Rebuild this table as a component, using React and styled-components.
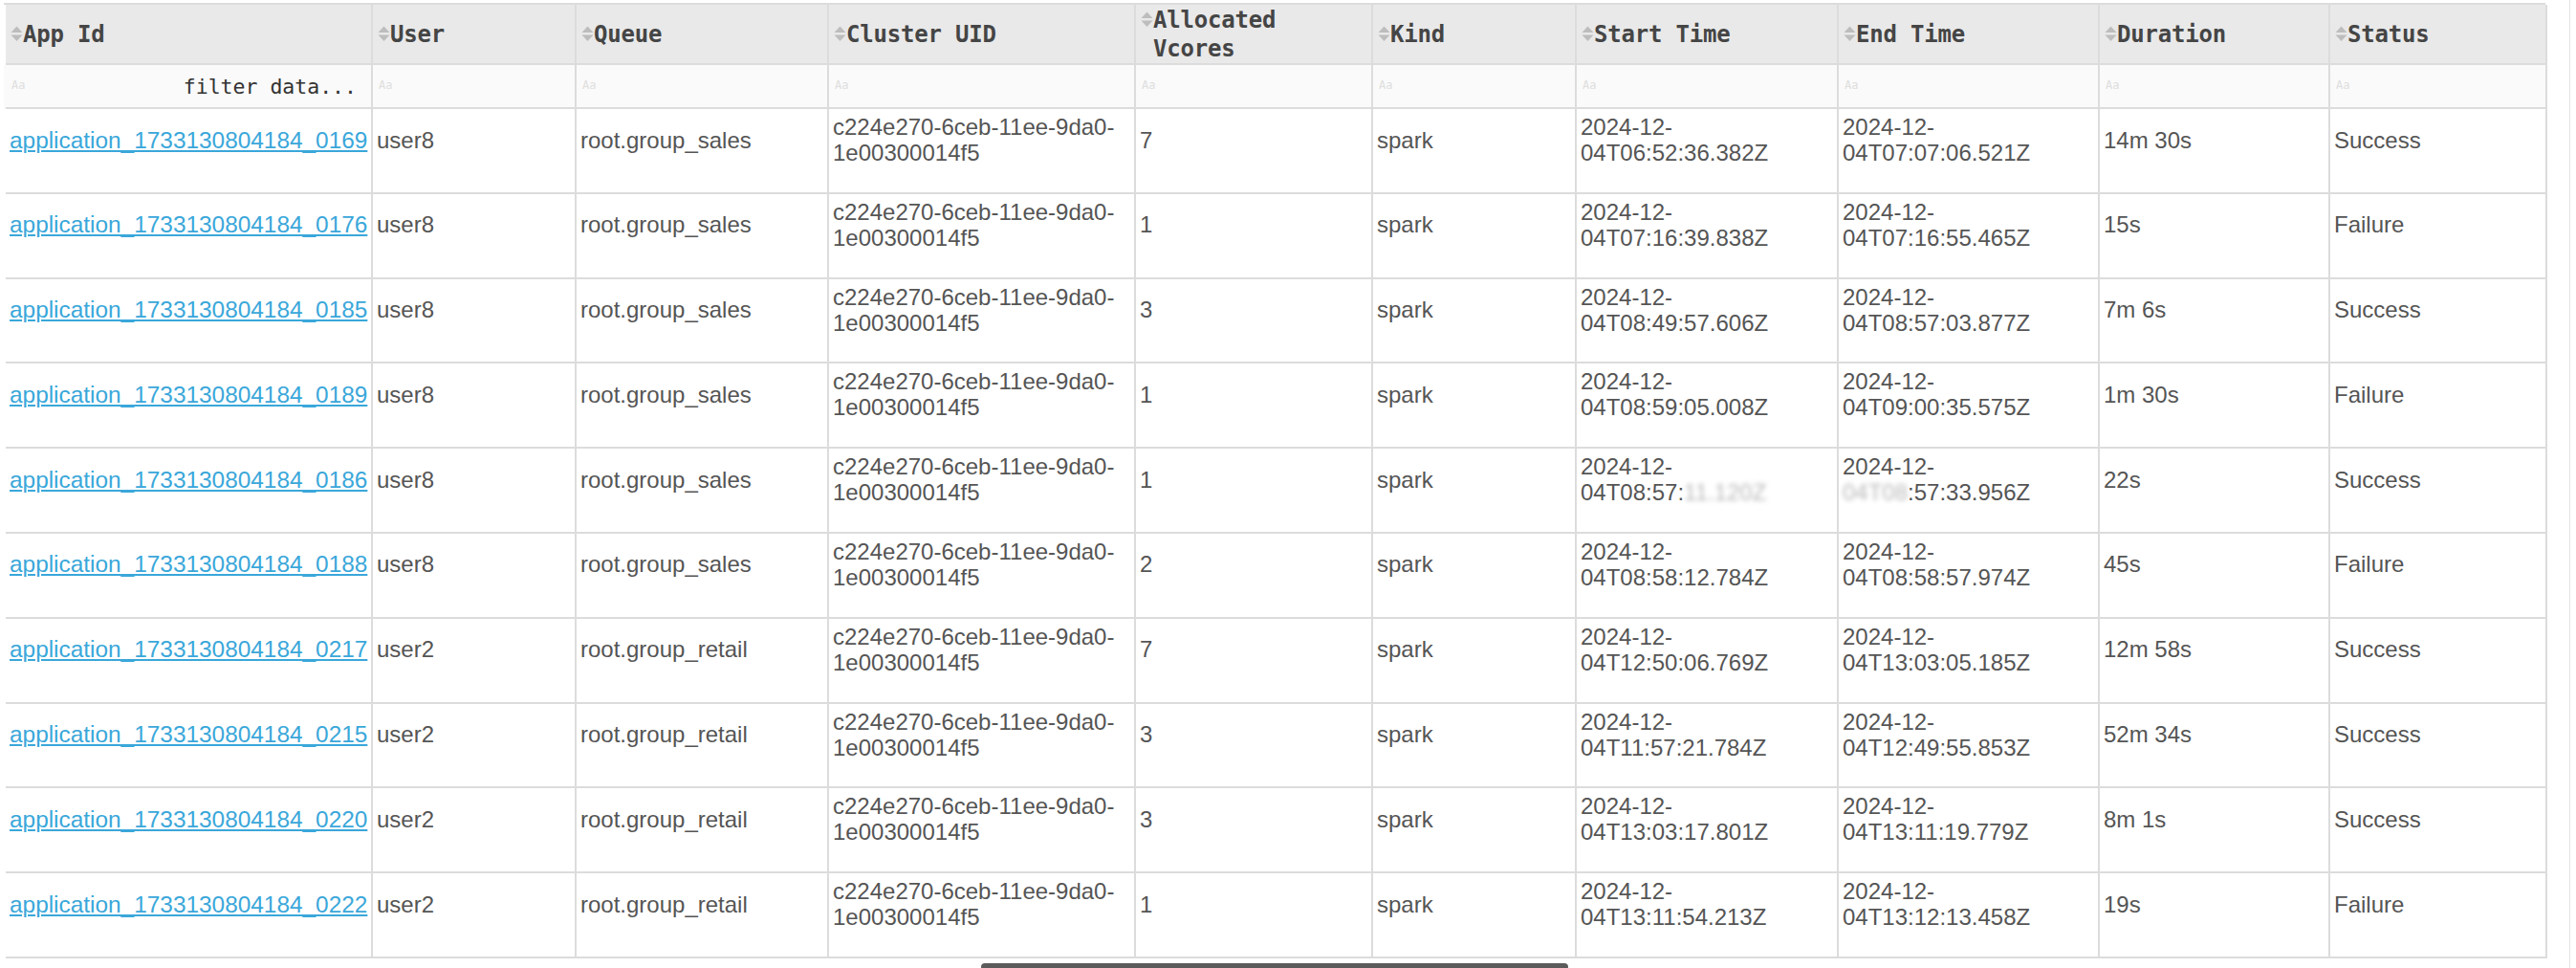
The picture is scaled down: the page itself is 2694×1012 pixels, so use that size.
import React from "react";
import styled, { createGlobalStyle } from "styled-components";

const GlobalStyle = createGlobalStyle`
  html, body { margin: 0; padding: 0; background: #ffffff; }
  body { font-family: "Liberation Sans", Arial, sans-serif; overflow: hidden; }
`;

const COLS = "384px 213px 264px 321px 248px 213px 274px 273px 241px 227px";
const BORDER = "#dcdcdc";

const Page = styled.div`
  display: flex;
  min-height: 100vh;
  width: 100%;
`;

const Main = styled.main`
  flex: 1;
  padding: 3px 0 0 4px;
  display: flex;
  flex-direction: column;
`;

const Track = styled.div`
  width: 6px;
  border-left: 1px solid #e2e2e2;
  background: #ffffff;
`;

const Table = styled.div`
  width: 2658px;
  border-left: 2px solid ${BORDER};
  border-top: 2px solid ${BORDER};
  box-sizing: border-box;
`;

const Row = styled.div`
  display: grid;
  grid-template-columns: ${COLS};
  height: ${(p) => p.$h}px;
  background: ${(p) => p.$bg || "#ffffff"};
  margin-left: -2px;
  padding-left: 2px;
  box-sizing: border-box;
`;

const HeadCell = styled.div`
  box-sizing: border-box;
  border-right: 2px solid ${BORDER};
  border-bottom: 2px solid ${BORDER};
  padding: 0 4px 0 5px;
  display: flex;
  align-items: center;
  background: #e9e9e9;
  min-width: 0;
`;

const HeadInner = styled.div`
  display: flex;
  align-items: flex-start;
`;

const SortBox = styled.span`
  height: 30px;
  width: 13px;
  display: inline-flex;
  align-items: center;
  flex: none;
`;

const HeadText = styled.span`
  font-family: "DejaVu Sans Mono", "Liberation Mono", monospace;
  font-weight: bold;
  font-size: 24px;
  line-height: 30px;
  color: #454545;
  letter-spacing: -0.2px;
  white-space: nowrap;
`;

const FilterCell = styled.div`
  box-sizing: border-box;
  border-right: 2px solid ${BORDER};
  border-bottom: 2px solid ${BORDER};
  padding: 0 15px 0 6px;
  display: flex;
  align-items: center;
  justify-content: space-between;
  background: #fafafa;
`;

const Hint = styled.span`
  font-family: "DejaVu Sans Mono", monospace;
  font-size: 12px;
  color: #dedede;
  margin-top: -2px;
`;

const FilterText = styled.span`
  font-family: "DejaVu Sans Mono", "Liberation Mono", monospace;
  font-size: 21.5px;
  color: #333333;
  white-space: nowrap;
`;

const Cell = styled.div`
  box-sizing: border-box;
  border-right: 2px solid ${BORDER};
  border-bottom: 2px solid ${BORDER};
  padding: 5px 3px 0 4px;
  min-width: 0;
`;

const CellBody = styled.div`
  min-height: 54px;
  display: flex;
  flex-direction: column;
  justify-content: center;
  font-family: "Liberation Sans", Arial, sans-serif;
  font-size: 24px;
  line-height: 27px;
  color: #555555;
  white-space: nowrap;
`;

const Line = styled.span`
  display: block;
`;

const AppLink = styled.a`
  color: #3aa7da;
  text-decoration: underline;
  text-decoration-thickness: 2px;
  text-underline-offset: 2px;
  font-size: 24.4px;
  cursor: pointer;
`;

const Blurred = styled.span`
  color: #b8b8b8;
  filter: blur(2.5px);
`;

const ScrollRow = styled.div`
  margin-top: 5px;
  height: 8px;
  display: flex;
`;

const Thumb = styled.div`
  margin-left: 1022px;
  width: 614px;
  height: 8px;
  border-radius: 4px;
  background: #5b5b5b;
`;

const SortIcon = () => (
  <svg width="13" height="17" viewBox="0 0 13 17">
    <polygon points="6.5,0.5 12.5,7 0.5,7" fill="#bdbdbd" />
    <polygon points="0.5,9.5 12.5,9.5 6.5,16" fill="#bdbdbd" />
  </svg>
);

const headers = [
  ["App Id"],
  ["User"],
  ["Queue"],
  ["Cluster UID"],
  ["Allocated", "Vcores"],
  ["Kind"],
  ["Start Time"],
  ["End Time"],
  ["Duration"],
  ["Status"],
];

const UID = "c224e270-6ceb-11ee-9da0-1e00300014f5";

const rows = [
  ["0169", "user8", "root.group_sales", "7", "2024-12-04T06:52:36.382Z", "2024-12-04T07:07:06.521Z", "14m 30s", "Success"],
  ["0176", "user8", "root.group_sales", "1", "2024-12-04T07:16:39.838Z", "2024-12-04T07:16:55.465Z", "15s", "Failure"],
  ["0185", "user8", "root.group_sales", "3", "2024-12-04T08:49:57.606Z", "2024-12-04T08:57:03.877Z", "7m 6s", "Success"],
  ["0189", "user8", "root.group_sales", "1", "2024-12-04T08:59:05.008Z", "2024-12-04T09:00:35.575Z", "1m 30s", "Failure"],
  ["0186", "user8", "root.group_sales", "1", "2024-12-04T08:57:11.120Z", "2024-12-04T08:57:33.956Z", "22s", "Success", true],
  ["0188", "user8", "root.group_sales", "2", "2024-12-04T08:58:12.784Z", "2024-12-04T08:58:57.974Z", "45s", "Failure"],
  ["0217", "user2", "root.group_retail", "7", "2024-12-04T12:50:06.769Z", "2024-12-04T13:03:05.185Z", "12m 58s", "Success"],
  ["0215", "user2", "root.group_retail", "3", "2024-12-04T11:57:21.784Z", "2024-12-04T12:49:55.853Z", "52m 34s", "Success"],
  ["0220", "user2", "root.group_retail", "3", "2024-12-04T13:03:17.801Z", "2024-12-04T13:11:19.779Z", "8m 1s", "Success"],
  ["0222", "user2", "root.group_retail", "1", "2024-12-04T13:11:54.213Z", "2024-12-04T13:12:13.458Z", "19s", "Failure"],
];

const TwoLines = ({ a, b }) => (
  <>
    <Line>{a}</Line>
    <Line>{b}</Line>
  </>
);

const DataCell = ({ children }) => (
  <Cell>
    <CellBody>{children}</CellBody>
  </Cell>
);

export default function App() {
  return (
    <Page>
      <GlobalStyle />
      <Main>
        <Table>
          <Row $h={63}>
            {headers.map((h, i) => (
              <HeadCell key={i}>
                <HeadInner>
                  <SortBox>
                    <SortIcon />
                  </SortBox>
                  <HeadText>
                    {h.map((t, j) => (
                      <Line key={j}>{t}</Line>
                    ))}
                  </HeadText>
                </HeadInner>
              </HeadCell>
            ))}
          </Row>
          <Row $h={46} $bg="#fafafa">
            {headers.map((h, i) => (
              <FilterCell key={i}>
                <Hint>Aa</Hint>
                {i === 0 && <FilterText>filter data...</FilterText>}
              </FilterCell>
            ))}
          </Row>
          {rows.map((r) => {
            const [id, user, queue, vc, start, end, dur, status, blur] = r;
            return (
              <Row key={id} $h={88.8}>
                <DataCell>
                  <Line>
                    <AppLink>{`application_1733130804184_${id}`}</AppLink>
                  </Line>
                </DataCell>
                <DataCell>{user}</DataCell>
                <DataCell>{queue}</DataCell>
                <DataCell>
                  <TwoLines a={UID.slice(0, 24)} b={UID.slice(24)} />
                </DataCell>
                <DataCell>{vc}</DataCell>
                <DataCell>spark</DataCell>
                <DataCell>
                  {blur ? (
                    <TwoLines
                      a={start.slice(0, 8)}
                      b={
                        <>
                          {start.slice(8, 17)}
                          <Blurred>{start.slice(17)}</Blurred>
                        </>
                      }
                    />
                  ) : (
                    <TwoLines a={start.slice(0, 8)} b={start.slice(8)} />
                  )}
                </DataCell>
                <DataCell>
                  {blur ? (
                    <TwoLines
                      a={end.slice(0, 8)}
                      b={
                        <>
                          <Blurred>{end.slice(8, 13)}</Blurred>
                          {end.slice(13)}
                        </>
                      }
                    />
                  ) : (
                    <TwoLines a={end.slice(0, 8)} b={end.slice(8)} />
                  )}
                </DataCell>
                <DataCell>{dur}</DataCell>
                <DataCell>{status}</DataCell>
              </Row>
            );
          })}
        </Table>
        <ScrollRow>
          <Thumb />
        </ScrollRow>
      </Main>
      <Track />
    </Page>
  );
}
